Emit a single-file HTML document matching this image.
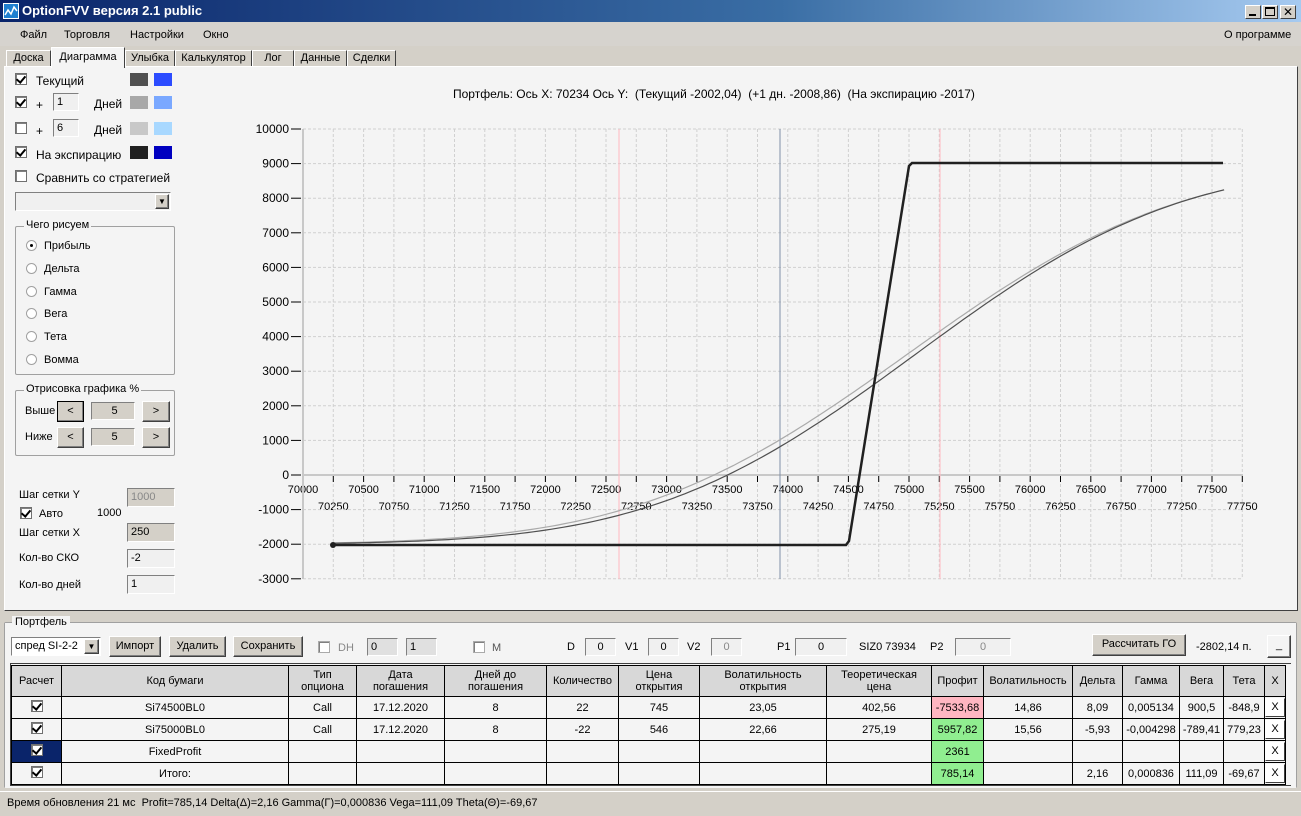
<!DOCTYPE html>
<html><head><meta charset="utf-8"><style>
*{box-sizing:border-box;margin:0;padding:0}
body{width:1301px;height:816px;overflow:hidden;background:#d4d0c8;font-family:"Liberation Sans","DejaVu Sans",sans-serif;font-size:11px;color:#000;position:relative}
.a{position:absolute;white-space:nowrap}
.title{left:0;top:0;width:1301px;height:22px;background:linear-gradient(90deg,#0a246a,#3a6ea5 60%,#a6caf0);color:#fff;font-weight:bold;font-size:13px;line-height:22px;padding-left:22px}
.menu{left:0;top:22px;width:1301px;height:24px;background:#d6d3ce}
.cb{width:12px;height:12px;border:1px solid #707070;background:#fff;box-shadow:inset 1px 1px 0 #808080}
.cb.c::after{content:"";position:absolute;left:2px;top:0px;width:4px;height:7px;border:solid #000;border-width:0 2px 2px 0;transform:rotate(40deg)}
.tb{border:1px solid #808080;border-right-color:#fff;border-bottom-color:#fff;background:#f0f0f0;font-size:11px;padding-left:3px;line-height:16px}
.btn{background:#d4d0c8;border:1px solid;border-color:#fff #404040 #404040 #fff;box-shadow:inset -1px -1px 0 #808080;text-align:center;line-height:18px}
.rad{width:11px;height:11px;border-radius:50%;border:1px solid #a0a0a0;background:#fff}
.grp{border:1px solid #a0a0a0;border-radius:2px}
.tab{top:50px;height:17px;background:#d4d0c8;border:1px solid #fff;border-right-color:#404040;border-bottom:none;text-align:center;line-height:15px;font-size:11px}
table{border-collapse:collapse;position:absolute;left:11px;top:665px;table-layout:fixed}
td{border:1px solid #000;text-align:center;font-size:11px;height:22px;padding:0;overflow:hidden}
tr.h td{background:#d8d8d8;height:31px;line-height:12px}
.xb{display:block;margin:1px auto;width:20px;height:19px;background:#fff;border:1px solid;border-color:#fff #404040 #404040 #fff;line-height:17px}
</style></head><body>
<div class="a title">OptionFVV версия 2.1 public</div>
<svg class="a" style="left:3px;top:3px" width="16" height="16"><rect width="16" height="16" fill="#fff"/><rect x="1" y="1" width="14" height="14" fill="#1f7fd0"/><path d="M2 12 L5 7 L8 11 L11 4 L14 8" stroke="#fff" stroke-width="1.5" fill="none"/></svg>
<div class="a" style="left:1245px;top:5px;width:16px;height:14px;background:#d4d0c8;border:1px solid #404040;border-color:#fff #404040 #404040 #fff"><div style="position:absolute;left:3px;top:8px;width:7px;height:2px;background:#000"></div></div>
<div class="a" style="left:1262px;top:5px;width:16px;height:14px;background:#d4d0c8;border:1px solid;border-color:#fff #404040 #404040 #fff"><div style="position:absolute;left:2px;top:1px;width:10px;height:9px;border:1px solid #000;border-top-width:2px"></div></div>
<div class="a" style="left:1280px;top:5px;width:16px;height:14px;background:#d4d0c8;border:1px solid;border-color:#fff #404040 #404040 #fff;font-weight:bold;font-size:12px;text-align:center;line-height:12px">✕</div>
<div class="a menu"></div>
<div class="a" style="left:20px;top:29px;font-size:11px">Файл</div>
<div class="a" style="left:64px;top:29px">Торговля</div>
<div class="a" style="left:130px;top:29px">Настройки</div>
<div class="a" style="left:203px;top:29px">Окно</div>
<div class="a" style="left:1224px;top:29px">О программе</div>
<div class="a tab" style="left:6px;width:45px">Доска</div>
<div class="a tab" style="left:125px;width:50px">Улыбка</div>
<div class="a tab" style="left:175px;width:77px">Калькулятор</div>
<div class="a tab" style="left:252px;width:42px">Лог</div>
<div class="a tab" style="left:294px;width:53px">Данные</div>
<div class="a tab" style="left:347px;width:49px">Сделки</div>
<div class="a" style="left:4px;top:66px;width:1294px;height:545px;background:#f4f4f4;border:1px solid #fff;border-right-color:#404040;border-bottom-color:#404040"></div>
<div class="a tab" style="left:51px;top:47px;width:74px;height:21px;background:#f4f4f4;line-height:19px;z-index:2">Диаграмма</div>

<div class="a cb c" style="left:15px;top:73px"></div><div class="a" style="left:36px;top:74px;font-size:12px">Текущий</div>
<div class="a" style="left:130px;top:73px;width:18px;height:13px;background:#505050"></div><div class="a" style="left:154px;top:73px;width:18px;height:13px;background:#2c4cff"></div>
<div class="a cb c" style="left:15px;top:96px"></div><div class="a" style="left:36px;top:98px;font-size:12px">+</div>
<div class="a tb" style="left:53px;top:93px;width:26px;height:18px">1</div><div class="a" style="left:94px;top:97px;font-size:12px">Дней</div>
<div class="a" style="left:130px;top:96px;width:18px;height:13px;background:#a8a8a8"></div><div class="a" style="left:154px;top:96px;width:18px;height:13px;background:#7aa8ff"></div>
<div class="a cb" style="left:15px;top:122px"></div><div class="a" style="left:36px;top:124px;font-size:12px">+</div>
<div class="a tb" style="left:53px;top:119px;width:26px;height:18px">6</div><div class="a" style="left:94px;top:123px;font-size:12px">Дней</div>
<div class="a" style="left:130px;top:122px;width:18px;height:13px;background:#c8c8c8"></div><div class="a" style="left:154px;top:122px;width:18px;height:13px;background:#a8d8ff"></div>
<div class="a cb c" style="left:15px;top:146px"></div><div class="a" style="left:36px;top:148px;font-size:12px">На экспирацию</div>
<div class="a" style="left:130px;top:146px;width:18px;height:13px;background:#202020"></div><div class="a" style="left:154px;top:146px;width:18px;height:13px;background:#0000c0"></div>
<div class="a cb" style="left:15px;top:170px"></div><div class="a" style="left:36px;top:171px;font-size:12px">Сравнить со стратегией</div>
<div class="a tb" style="left:15px;top:192px;width:156px;height:19px;background:#f0f0f0"></div>
<div class="a btn" style="left:155px;top:194px;width:14px;height:15px;font-size:8px;line-height:13px">▼</div>
<div class="a grp" style="left:15px;top:226px;width:160px;height:149px"></div>
<div class="a" style="left:24px;top:219px;background:#f4f4f4;padding:0 2px">Чего рисуем</div>
<div class="a rad" style="left:26px;top:240px"><div style="position:absolute;left:3px;top:3px;width:3px;height:3px;background:#000;border-radius:50%"></div></div><div class="a" style="left:44px;top:240px">Прибыль</div>
<div class="a rad" style="left:26px;top:263px"></div><div class="a" style="left:44px;top:263px">Дельта</div>
<div class="a rad" style="left:26px;top:286px"></div><div class="a" style="left:44px;top:286px">Гамма</div>
<div class="a rad" style="left:26px;top:308px"></div><div class="a" style="left:44px;top:308px">Вега</div>
<div class="a rad" style="left:26px;top:331px"></div><div class="a" style="left:44px;top:331px">Тета</div>
<div class="a rad" style="left:26px;top:354px"></div><div class="a" style="left:44px;top:354px">Вомма</div>
<div class="a grp" style="left:15px;top:390px;width:160px;height:66px"></div>
<div class="a" style="left:24px;top:383px;background:#f4f4f4;padding:0 2px">Отрисовка графика %</div>
<div class="a" style="left:25px;top:405px">Выше</div>
<div class="a btn" style="left:57px;top:401px;width:27px;height:21px;border-color:#000">&lt;</div>
<div class="a tb" style="left:91px;top:402px;width:44px;height:18px;background:#d4d0c8;text-align:center">5</div>
<div class="a btn" style="left:142px;top:401px;width:28px;height:21px">&gt;</div>
<div class="a" style="left:25px;top:431px">Ниже</div>
<div class="a btn" style="left:57px;top:427px;width:27px;height:21px">&lt;</div>
<div class="a tb" style="left:91px;top:428px;width:44px;height:18px;background:#d4d0c8;text-align:center">5</div>
<div class="a btn" style="left:142px;top:427px;width:28px;height:21px">&gt;</div>
<div class="a" style="left:19px;top:489px">Шаг сетки Y</div>
<div class="a tb" style="left:127px;top:488px;width:48px;height:19px;background:#d4d0c8;color:#888">1000</div>
<div class="a cb c" style="left:20px;top:507px"></div><div class="a" style="left:39px;top:508px">Авто</div><div class="a" style="left:97px;top:507px">1000</div>
<div class="a" style="left:19px;top:527px">Шаг сетки X</div>
<div class="a tb" style="left:127px;top:523px;width:48px;height:19px;background:#d4d0c8">250</div>
<div class="a" style="left:19px;top:552px">Кол-во СКО</div>
<div class="a tb" style="left:127px;top:549px;width:48px;height:19px">-2</div>
<div class="a" style="left:19px;top:579px">Кол-во дней</div>
<div class="a tb" style="left:127px;top:575px;width:48px;height:19px">1</div>

<div class="a" style="left:453px;top:87px;font-size:12px">Портфель: Ось X: 70234 Ось Y: &nbsp;(Текущий -2002,04) &nbsp;(+1 дн. -2008,86) &nbsp;(На экспирацию -2017)</div>
<svg id="ch" class="a" style="left:0;top:0" width="1301" height="612" font-family="Liberation Sans, sans-serif" font-size="11"></svg>

<div class="a grp" style="left:4px;top:622px;width:1293px;height:166px;border-color:#a0a0a0"></div>
<div class="a" style="left:5px;top:623px;width:1291px;height:165px;background:#f4f4f4"></div>
<div class="a" style="left:12px;top:616px;background:#f4f4f4;padding:0 3px">Портфель</div>
<div class="a tb" style="left:11px;top:637px;width:90px;height:19px;background:#fff">спред SI-2-2</div>
<div class="a btn" style="left:84px;top:639px;width:15px;height:15px;font-size:8px;line-height:13px">▼</div>
<div class="a btn" style="left:109px;top:636px;width:52px;height:21px">Импорт</div>
<div class="a btn" style="left:169px;top:636px;width:57px;height:21px">Удалить</div>
<div class="a btn" style="left:233px;top:636px;width:70px;height:21px">Сохранить</div>
<div class="a cb" style="left:318px;top:641px;border-color:#aaa"></div><div class="a" style="left:338px;top:642px;color:#888">DH</div>
<div class="a tb" style="left:367px;top:638px;width:31px;height:18px;background:#e0e0e0">0</div>
<div class="a tb" style="left:406px;top:638px;width:31px;height:18px;background:#e0e0e0">1</div>
<div class="a cb" style="left:473px;top:641px;border-color:#aaa"></div><div class="a" style="left:492px;top:642px;color:#555">M</div>
<div class="a" style="left:567px;top:641px">D</div><div class="a tb" style="left:585px;top:638px;width:31px;height:18px;text-align:center;padding:0">0</div>
<div class="a" style="left:625px;top:641px">V1</div><div class="a tb" style="left:648px;top:638px;width:31px;height:18px;text-align:center;padding:0">0</div>
<div class="a" style="left:687px;top:641px">V2</div><div class="a tb" style="left:711px;top:638px;width:31px;height:18px;text-align:center;padding:0;color:#888">0</div>
<div class="a" style="left:777px;top:641px">P1</div><div class="a tb" style="left:795px;top:638px;width:52px;height:18px;text-align:center;padding:0">0</div>
<div class="a" style="left:859px;top:641px">SIZ0 73934</div>
<div class="a" style="left:930px;top:641px">P2</div><div class="a tb" style="left:955px;top:638px;width:56px;height:18px;text-align:center;padding:0;color:#888">0</div>
<div class="a btn" style="left:1092px;top:634px;width:94px;height:22px">Рассчитать ГО</div>
<div class="a" style="left:1196px;top:641px">-2802,14 п.</div>
<div class="a btn" style="left:1267px;top:635px;width:24px;height:23px;background:#f4f4f4">_</div>
<div class="a" style="left:10px;top:663px;width:1281px;height:123px;border:1px solid #404040;border-right:none;background:#f4f4f4"></div>
<table>
<colgroup><col style="width:50px"><col style="width:227px"><col style="width:68px"><col style="width:88px"><col style="width:102px"><col style="width:72px"><col style="width:81px"><col style="width:127px"><col style="width:105px"><col style="width:52px"><col style="width:89px"><col style="width:50px"><col style="width:57px"><col style="width:44px"><col style="width:41px"><col style="width:20px"></colgroup>
<tr class="h"><td>Расчет</td><td>Код бумаги</td><td>Тип<br>опциона</td><td>Дата<br>погашения</td><td>Дней до<br>погашения</td><td>Количество</td><td>Цена<br>открытия</td><td>Волатильность<br>открытия</td><td>Теоретическая<br>цена</td><td>Профит</td><td>Волатильность</td><td>Дельта</td><td>Гамма</td><td>Вега</td><td>Тета</td><td>X</td></tr>
<tr><td><span class="cb c" style="display:inline-block;position:relative"></span></td><td>Si74500BL0</td><td>Call</td><td>17.12.2020</td><td>8</td><td>22</td><td>745</td><td>23,05</td><td>402,56</td><td style="background:#ffb6c1">-7533,68</td><td>14,86</td><td>8,09</td><td>0,005134</td><td>900,5</td><td>-848,9</td><td><span class="xb">X</span></td></tr>
<tr><td><span class="cb c" style="display:inline-block;position:relative"></span></td><td>Si75000BL0</td><td>Call</td><td>17.12.2020</td><td>8</td><td>-22</td><td>546</td><td>22,66</td><td>275,19</td><td style="background:#90ee90">5957,82</td><td>15,56</td><td>-5,93</td><td>-0,004298</td><td>-789,41</td><td>779,23</td><td><span class="xb">X</span></td></tr>
<tr><td style="background:#0a246a"><span class="cb c" style="display:inline-block;position:relative"></span></td><td>FixedProfit</td><td></td><td></td><td></td><td></td><td></td><td></td><td></td><td style="background:#90ee90">2361</td><td></td><td></td><td></td><td></td><td></td><td><span class="xb">X</span></td></tr>
<tr><td><span class="cb c" style="display:inline-block;position:relative"></span></td><td>Итого:</td><td></td><td></td><td></td><td></td><td></td><td></td><td></td><td style="background:#90ee90">785,14</td><td></td><td>2,16</td><td>0,000836</td><td>111,09</td><td>-69,67</td><td><span class="xb">X</span></td></tr>
</table>
<div class="a" style="left:0;top:791px;width:1301px;height:25px;background:#d4d0c8;border-top:1px solid #fff"></div>
<div class="a" style="left:7px;top:797px">Время обновления 21 мс &nbsp;Profit=785,14 Delta(Δ)=2,16 Gamma(Γ)=0,000836 Vega=111,09 Theta(Θ)=-69,67</div>

<script>
(function(){
var s=document.getElementById('ch'),h='';
function X(v){return 303+(v-70000)/250*30.3}
function Y(v){return 475-v/1000*34.6}
for(var v=70000;v<=77750;v+=250){var x=X(v);h+='<line x1="'+x+'" y1="129" x2="'+x+'" y2="579" stroke="#d0d0d0" stroke-dasharray="3,2"/>';
h+='<line x1="'+x+'" y1="476" x2="'+x+'" y2="482" stroke="#000"/>';
var r=((v-70000)/250)%2;h+='<text x="'+x+'" y="'+(r?510:493)+'" text-anchor="middle">'+v+'</text>';}
for(var k=-3;k<=10;k++){var y=Y(k*1000);h+='<line x1="303" y1="'+y+'" x2="1243" y2="'+y+'" stroke="#d0d0d0" stroke-dasharray="3,2"/><line x1="291" y1="'+y+'" x2="301" y2="'+y+'" stroke="#000"/><text x="289" y="'+(y+4)+'" text-anchor="end" font-size="12">'+(k*1000)+'</text>';}
h+='<line x1="303" y1="129" x2="303" y2="579" stroke="#c8c8c8" stroke-width="2"/><line x1="303" y1="475" x2="1243" y2="475" stroke="#c8c8c8" stroke-width="2"/>';
h+='<line x1="619" y1="129" x2="619" y2="579" stroke="#ffb8c0"/><line x1="940" y1="129" x2="940" y2="579" stroke="#ffb8c0"/><line x1="780" y1="129" x2="780" y2="579" stroke="#8090a8"/>';
function erf(x){var t=1/(1+0.3275911*Math.abs(x));var y=1-(((((1.061405429*t-1.453152027)*t)+1.421413741)*t-0.284496736)*t+0.254829592)*t*Math.exp(-x*x);return x>=0?y:-y}
function P(z){return 0.5*(1+erf(z/Math.SQRT2))}
function curve(m,sd,col){var d='';for(var v=70250;v<=77600;v+=50){var val=-2000+11000*P((v-m)/sd);d+=(d?'L':'M')+X(v).toFixed(1)+' '+Y(val).toFixed(1)}return '<path d="'+d+'" fill="none" stroke="'+col+'" stroke-width="1.2"/>'}
h+=curve(74990,1760,'#aaaaaa')+curve(75058,1712,'#505050');
h+='<path d="M333 545 L846 545 L849 541 L909 166 L912 163 L1223 163" fill="none" stroke="#202020" stroke-width="2.5"/><circle cx="333" cy="545" r="3" fill="#202020"/>';
s.innerHTML=h;})();
</script>
</body></html>
